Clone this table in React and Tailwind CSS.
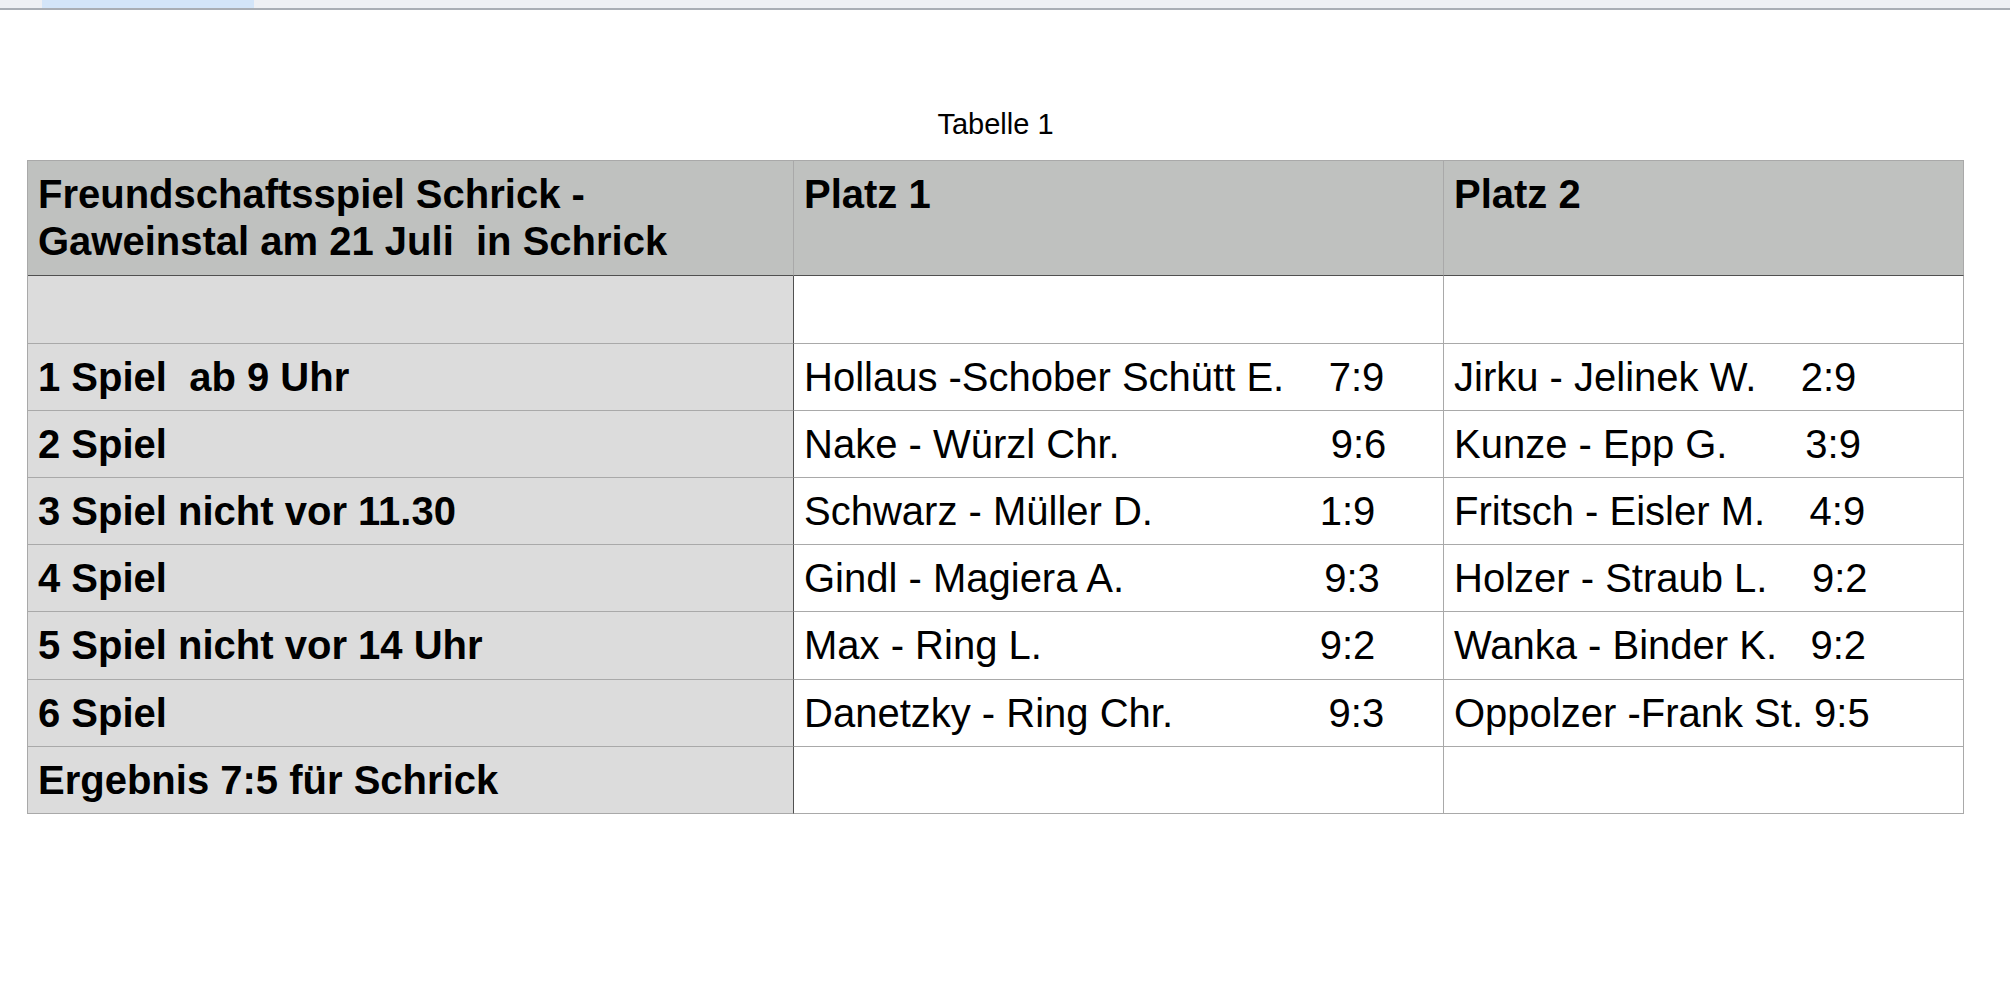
import React from 'react';

const rows = [
    { label: '', p1: '', p2: '', h: 'h-[68px]' },
    { label: '1 Spiel  ab 9 Uhr', p1: 'Hollaus -Schober Schütt E.    7:9', p2: 'Jirku - Jelinek W.    2:9', h: 'h-[67px]' },
    { label: '2 Spiel', p1: 'Nake - Würzl Chr.                   9:6', p2: 'Kunze - Epp G.       3:9', h: 'h-[67px]' },
    { label: '3 Spiel nicht vor 11.30', p1: 'Schwarz - Müller D.               1:9', p2: 'Fritsch - Eisler M.    4:9', h: 'h-[67px]' },
    { label: '4 Spiel', p1: 'Gindl - Magiera A.                  9:3', p2: 'Holzer - Straub L.    9:2', h: 'h-[67px]' },
    { label: '5 Spiel nicht vor 14 Uhr', p1: 'Max - Ring L.                         9:2', p2: 'Wanka - Binder K.   9:2', h: 'h-[68px]' },
    { label: '6 Spiel', p1: 'Danetzky - Ring Chr.              9:3', p2: 'Oppolzer -Frank St. 9:5', h: 'h-[67px]' },
    { label: 'Ergebnis 7:5 für Schrick', p1: '', p2: '', h: 'h-[67px]' },
];

function App() {
    return (
        <div className="min-h-screen bg-white text-black font-['Liberation_Sans',Arial,sans-serif]">
            {/* toolbar strip */}
            <div className="h-[10px] bg-[#eef0f4] border-b-2 border-[#a9aeb5]">
                <div className="ml-[42px] w-[212px] h-full bg-[#d3e5f9]"></div>
            </div>

            <div className="ml-[27px] w-[1937px]">
                <div className="mt-[100px] h-[29px] text-[29px] leading-[29px] text-center">Tabelle 1</div>

                <div className="mt-[21px] border-l border-t border-[#a9a9a9] grid grid-cols-[766px_650px_520px] text-[40px] leading-[47px] whitespace-pre">
                    <div className="h-[115px] bg-[#bfc1bf] border-r border-r-[#a9a9a9] border-b border-b-[#505050] px-[10px] pt-[10px] font-bold whitespace-pre-wrap">
                        Freundschaftsspiel Schrick -<br />Gaweinstal am 21 Juli  in Schrick
                    </div>
                    <div className="h-[115px] bg-[#bfc1bf] border-r border-r-[#a9a9a9] border-b border-b-[#505050] px-[10px] pt-[10px] font-bold">Platz 1</div>
                    <div className="h-[115px] bg-[#bfc1bf] border-r border-r-[#a9a9a9] border-b border-b-[#505050] px-[10px] pt-[10px] font-bold">Platz 2</div>

                    {rows.map((r, i) => (
                        <React.Fragment key={i}>
                            <div className={`${r.h} bg-[#dcdcdc] border-r border-r-[#505050] border-b border-b-[#a9a9a9] px-[10px] flex items-center font-bold`}>
                                {r.label}
                            </div>
                            <div className={`${r.h} border-r border-b border-[#a9a9a9] px-[10px] flex items-center`}>
                                {r.p1}
                            </div>
                            <div className={`${r.h} border-r border-b border-[#a9a9a9] px-[10px] flex items-center`}>
                                {r.p2}
                            </div>
                        </React.Fragment>
                    ))}
                </div>
            </div>
        </div>
    );
}

export default App;
